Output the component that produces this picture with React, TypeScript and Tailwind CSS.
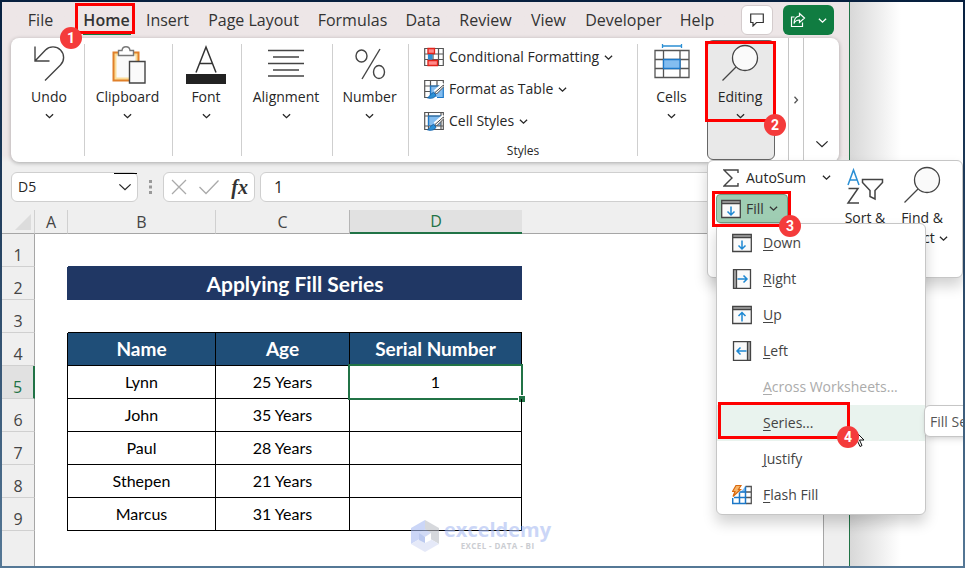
import type { ReactNode } from 'react';
import clsx from 'clsx';

interface Tab {
  label: string;
  width: string;
}

const tabs: Tab[] = [
  { label: 'Insert', width: 'w-[61px]' },
  { label: 'Page Layout', width: 'w-[111px]' },
  { label: 'Formulas', width: 'w-[87px]' },
  { label: 'Data', width: 'w-[54px]' },
  { label: 'Review', width: 'w-[71px]' },
  { label: 'View', width: 'w-[55px]' },
  { label: 'Developer', width: 'w-[95px]' },
  { label: 'Help', width: 'w-[52px]' },
];

const people = [
  { row: 5, name: 'Lynn', age: '25 Years', serial: '1' },
  { row: 6, name: 'John', age: '35 Years', serial: '' },
  { row: 7, name: 'Paul', age: '28 Years', serial: '' },
  { row: 8, name: 'Sthepen', age: '21 Years', serial: '' },
  { row: 9, name: 'Marcus', age: '31 Years', serial: '' },
];

function Chevron({ className = 'w-2 h-2' }: { className?: string }) {
  return (
    <svg viewBox="0 0 8 8" className={clsx('shrink-0', className)} fill="none" stroke="currentColor" strokeWidth="1.3">
      <path d="M.8 2.5 4 5.500 7.200 2.500" vectorEffect="non-scaling-stroke" />
    </svg>
  );
}

function Badge({ children, className }: { children: ReactNode; className: string }) {
  return (
    <span
      className={clsx(
        'absolute z-30 flex items-center justify-center w-[22px] h-[22px] rounded-full bg-[#f43b3b] text-white text-sm font-bold font-[Roboto,sans-serif]',
        className
      )}
    >
      {children}
    </span>
  );
}

function UndoIcon() {
  return (
    <svg viewBox="0 0 36 40" className="w-9 h-10" fill="none" stroke="#444" strokeWidth="1.4">
      <path d="M4 2.500V17H18.500M4 17 14.500 6A10.600 10.600 0 0 1 29.500 21L14 36.500" />
    </svg>
  );
}

function ClipboardIcon() {
  return (
    <svg viewBox="0 0 36 40" className="w-9 h-10">
      <path d="M3.500 8.500H28.500V36.500H3.500Z" fill="#fbdc97" stroke="#e0802a" strokeWidth="2" />
      <path d="M6.500 11.500H25.500V33.500H6.500Z" fill="#fafafa" />
      <path d="M8.500 11.500V6.500H12C12.500 1.500 19.500 1.500 20 6.500H23.500V11.500Z" fill="#fff" stroke="#777" strokeWidth="1.400" />
      <path d="M19.500 17.500H35V39H19.500Z" fill="#fafafa" stroke="#444" strokeWidth="1.400" />
    </svg>
  );
}

function FontIcon() {
  return (
    <svg viewBox="0 0 40 40" className="w-10 h-10" fill="none">
      <path d="M10 28.500 20 3 30 28.500M13.500 19.500H26.500" stroke="#333" strokeWidth="1.500" />
      <path d="M0 30H40V40H0Z" fill="#222" />
    </svg>
  );
}

function AlignIcon() {
  return (
    <svg viewBox="0 0 36 40" className="w-9 h-10" stroke="#444" strokeWidth="1.300">
      <path d="M0 6.500H36M5 13H31M0 19.500H36M5 26H31M0 32H36" />
    </svg>
  );
}

function PercentIcon() {
  return (
    <svg viewBox="0 0 32 40" className="w-8 h-10" fill="none" stroke="#444" strokeWidth="1.400">
      <ellipse cx="7.500" cy="12" rx="5.500" ry="6" />
      <ellipse cx="25" cy="28" rx="5.500" ry="6.500" />
      <path d="M26 5 8 35" />
    </svg>
  );
}

function CellsIcon() {
  return (
    <svg viewBox="0 0 36 40" className="w-9 h-10" fill="none">
      <path d="M8.500 2H27.500M8.500 0V4M27.500 0V4" stroke="#2b8fd4" strokeWidth="1.300" />
      <path d="M1 6.500H35V33.500H1ZM1 15.500H35M1 24.500H35M9.500 6.500V33.500M26 6.500V33.500" stroke="#555" strokeWidth="1.300" />
      <path d="M9.500 15.500H26V24.500H9.500Z" fill="#83bdf0" stroke="#1c78c8" strokeWidth="1.300" />
    </svg>
  );
}

function SearchIcon({ className }: { className?: string }) {
  return (
    <svg viewBox="0 0 38 38" className={clsx('w-[38px] h-[38px]', className)} fill="none" stroke="#444" strokeWidth="1.300">
      <circle cx="24" cy="14" r="12.500" fill="#fafafa" />
      <path d="M15 23 1.500 36.500" />
    </svg>
  );
}

function ConditionalIcon() {
  return (
    <svg viewBox="0 0 20 20" className="w-5 h-5" fill="none">
      <path d="M.700 1.500H19.300V18.500H.700ZM.700 7H19M.700 12.500H19M4.500 1.500V18M9 1.500V18M14.500 1.500V18" stroke="#555" strokeWidth="1.200" />
      <path d="M4.500 7H8V12.500H4.500Z" fill="#fff" stroke="#2b8fd4" />
      <path d="M5 7H8V12.500H5Z" fill="#2b8fd4" />
      <path d="M4 1.500H10.500V6.500H4ZM4 13.500H13.500V18.500H4Z" fill="#ff8a8a" stroke="#e2231a" strokeWidth="1.300" />
    </svg>
  );
}

function TableStyleIcon({ full }: { full?: boolean }) {
  return (
    <svg viewBox="0 0 20 20" className="w-5 h-5" fill="none">
      <path d="M.700 1.500H19.300V18.500H.700Z" fill="#fff" />
      {full ? <path d="M4.500 5H17V15H4.500Z" fill="#83bdf0" /> : <path d="M6.500 7H19V18H6.500Z" fill="#83bdf0" />}
      {full ? (
        <path d="M.700 1.500H19.300V18.500H.700ZM.700 5H19M.700 15H19M4.500 1.500V18M17 1.500V18" stroke="#555" strokeWidth="1.200" />
      ) : (
        <path d="M19.300 7V1.500H.700V18.500H6.500M.700 7H19M.700 12.500H7M6.500 1.500V18M13 1.500V7" stroke="#555" strokeWidth="1.200" />
      )}
      {full ? (
        <path d="M4.500 15V5H17" stroke="#1c78c8" strokeWidth="1.200" />
      ) : (
        <path d="M6.500 18V7H19.300V18.500H13" stroke="#1c78c8" strokeWidth="1.200" />
      )}
      <path d="M20 5 11 13" stroke="#fff" strokeWidth="4" />
      <path d="M19.500 6 11 13.500 12.500 15 20 7.500Z" fill="#fff" stroke="#444" />
      <path d="M3.500 18.800C6 18 6 14.500 9.500 13.500L12 16C11 19 7 20 3.500 18.800Z" fill="#2b8fd4" stroke="#1666b0" />
    </svg>
  );
}

type Direction = 'down' | 'right' | 'up' | 'left';

const arrowPaths: Record<Direction, string> = {
  down: 'M10 7.500V16M6.500 12.500 10 16 13.500 12.500',
  up: 'M10 16.500V7.500M6.500 11 10 7.500 13.500 11',
  right: 'M5.500 10H15M11.500 6.500 15 10 11.500 13.500',
  left: 'M14.500 10H5M8.500 6.500 5 10 8.500 13.500',
};

function FillIcon({ direction }: { direction: Direction }) {
  return (
    <svg viewBox="0 0 20 20" className="w-5 h-5" fill="none">
      {(direction === 'down' || direction === 'up') && (
        <>
          <path d="M.700 1.500H19.300V18.500H.700Z" fill="#fafafa" />
          <path d="M.700 1.500H19.300V4H.700Z" fill="#aaa" />
          <path d="M.700 1.500H19.300V18.500H.700ZM.700 4.500H19.300" stroke="#444" strokeWidth="1.300" />
        </>
      )}
      {direction === 'right' && (
        <>
          <path d="M1.500.700H18.500V19.300H1.500Z" fill="#fafafa" />
          <path d="M1.500.700H5V19.300H1.500Z" fill="#aaa" />
          <path d="M1.500.700H18.500V19.300H1.500ZM4.500.700V19.300" stroke="#444" strokeWidth="1.300" />
        </>
      )}
      {direction === 'left' && (
        <>
          <path d="M1.500.700H18.500V19.300H1.500Z" fill="#fafafa" />
          <path d="M15.500.700H18.500V19.300H15.500Z" fill="#aaa" />
          <path d="M1.500.700H18.500V19.300H1.500ZM15.500.700V19.300" stroke="#444" strokeWidth="1.300" />
        </>
      )}
      <path d={arrowPaths[direction]} stroke="#1e88d2" strokeWidth="1.500" />
    </svg>
  );
}

function FlashFillIcon() {
  return (
    <svg viewBox="0 0 20 20" className="w-5 h-5" fill="none">
      <path d="M13.500 1.500H19.300V18.500H14M14 7H19M14 12.500H19" stroke="#555" strokeWidth="1.300" />
      <path d="M8 7.500 13.500 1.500V7.500Z" fill="#83bdf0" />
      <path d="M13.500 1.500V18.500H.700V13M7.500 7.500V18.500M2 12.500H13.500M7.500 7H13.500" stroke="#1c78c8" strokeWidth="1.500" />
      <path d="M4 .500H9L6.500 4.500H8.500L1 11.500 3 6.500H.500Z" fill="#f7b56a" stroke="#d9690f" strokeWidth="1.200" />
    </svg>
  );
}

function RibbonGroup({ icon, label, className }: { icon: ReactNode; label: string; className: string }) {
  return (
    <div className={clsx('shrink-0 my-1.5 border-r border-[#cfcfcf]', className)}>
      <button className="flex flex-col items-center w-full">
        {icon}
        <span className="mt-[3px] text-sm leading-5">{label}</span>
        <Chevron className="w-[9px] h-[18px]" />
      </button>
    </div>
  );
}

function StyleButton({ icon, label }: { icon: ReactNode; label: string }) {
  return (
    <button className="flex items-center h-8 gap-[5px] text-sm">
      {icon}
      {label}
      <Chevron className="w-[9px] h-[9px]" />
    </button>
  );
}

function MenuItem({ icon, label, disabled, active, children }: {
  icon?: ReactNode;
  label: string;
  disabled?: boolean;
  active?: boolean;
  children?: ReactNode;
}) {
  return (
    <li className="relative">
      <button
        disabled={disabled}
        className={clsx(
          'flex items-center w-full h-9 pl-[15px] gap-[11px] text-sm text-left',
          disabled ? 'text-[#ababab]' : 'text-[#444]',
          active && 'bg-[#e9f3ee]'
        )}
      >
        <span className="w-5 h-5">{icon}</span>
        <span>
          <span className="underline underline-offset-2">{label[0]}</span>
          {label.slice(1)}
        </span>
      </button>
      {children}
    </li>
  );
}

function FillMenu() {
  return (
    <div className="absolute z-20 left-0 top-full w-[210px] h-[292px] pt-px bg-white border border-[#c6c6c6] rounded-md shadow-[0_8px_14px_rgba(0,0,0,0.18)]">
      <ul>
        <MenuItem icon={<FillIcon direction="down" />} label="Down" />
        <MenuItem icon={<FillIcon direction="right" />} label="Right" />
        <MenuItem icon={<FillIcon direction="up" />} label="Up" />
        <MenuItem icon={<FillIcon direction="left" />} label="Left" />
        <MenuItem label="Across Worksheets..." disabled />
        <MenuItem label="Series..." active>
          <span className="absolute left-[1px] -top-[3px] w-[132px] h-[37px] border-3 border-[#fe0000]" />
          <Badge className="left-[120px] top-[21px]">4</Badge>
          <svg viewBox="0 0 12 19" className="absolute z-20 left-[136px] top-6 w-3 h-[19px]">
            <path d="M1 1V15L4.500 12 7 17.500 9 16.500 6.500 11H11Z" fill="#fff" stroke="#111" />
          </svg>
          <span
            role="tooltip"
            className="absolute left-[207px] top-0 h-8 px-[5px] leading-8 text-sm whitespace-nowrap text-[#555] bg-white border border-[#c6c6c6] rounded-md shadow-md"
          >
            Fill Series
          </span>
        </MenuItem>
        <MenuItem label="Justify" />
        <MenuItem icon={<FlashFillIcon />} label="Flash Fill" />
      </ul>
    </div>
  );
}

function EditingPanel() {
  return (
    <div className="absolute z-20 left-0 top-full w-64 h-[118px] flex bg-white border border-[#c6c6c6] rounded-md shadow-[0_8px_14px_rgba(0,0,0,0.18)]">
      <div className="w-[125px] pl-2">
        <button className="flex items-center w-full h-[33px] pl-[7px] text-sm">
          <svg viewBox="0 0 16 18" className="w-4 h-[18px] mr-[7px]" fill="none" stroke="#444" strokeWidth="1.400">
            <path d="M15 4V1H1L9 9 1 17H15V14" />
          </svg>
          AutoSum
          <Chevron className="w-[9px] h-[9px] ml-auto mr-0.5" />
        </button>
        <div className="relative">
          <button className="flex items-center h-[29px] w-[72px] pl-1 gap-[5px] text-sm text-[#333] bg-[#9fcdb3] border border-[#6f9c83] rounded">
            <FillIcon direction="down" />
            Fill
            <Chevron className="w-[9px] h-[9px]" />
          </button>
          <span className="absolute z-30 -left-1 -top-[3px] w-[79px] h-9 border-3 border-[#fe0000]" />
          <Badge className="left-[63px] top-[21px]">3</Badge>
          <FillMenu />
        </div>
      </div>
      <button className="flex flex-col items-center w-[64px] pt-[5px] text-sm leading-5">
        <svg viewBox="0 0 38 38" className="w-[38px] h-[42px]" fill="none" strokeWidth="1.500">
          <path d="M2 17 7.500 2 13 17M4 12H11" stroke="#2b8fd4" />
          <path d="M2.500 20.500H12L2 35H13" stroke="#444" />
          <path d="M16.500 11.500H36.500V14.500L29 22.500V31L24 28.500V22.500L16.500 14.500Z" stroke="#444" />
        </svg>
        Sort &amp;
        <span className="flex items-center gap-1">
          Filter <Chevron />
        </span>
      </button>
      <button className="flex flex-col items-center w-[50px] pt-[5px] text-sm leading-5">
        <SearchIcon className="mb-1" />
        <span className="whitespace-nowrap">Find &amp;</span>
        <span className="flex items-center gap-1">
          Select <Chevron className="w-[9px] h-[9px]" />
        </span>
      </button>
    </div>
  );
}

function Ribbon() {
  return (
    <div className="flex shrink-0 h-[124px] ml-[9px] mr-[10px] bg-white rounded-lg shadow-[0_1px_4px_rgba(0,0,0,0.3)]">
      <RibbonGroup className="w-[74px] pl-[3px]" icon={<UndoIcon />} label="Undo" />
      <RibbonGroup className="w-[88px] pr-0.5" icon={<ClipboardIcon />} label="Clipboard" />
      <RibbonGroup className="w-[69px] pr-0.5" icon={<FontIcon />} label="Font" />
      <RibbonGroup className="w-[91px] pr-0.5" icon={<AlignIcon />} label="Alignment" />
      <RibbonGroup className="w-[76px] pr-0.5" icon={<PercentIcon />} label="Number" />
      <div className="flex flex-col items-start grow my-1.5 pl-[15px] border-r border-[#cfcfcf]">
        <div className="-mt-[3px]">
          <StyleButton icon={<ConditionalIcon />} label="Conditional Formatting" />
          <StyleButton icon={<TableStyleIcon />} label="Format as Table" />
          <StyleButton icon={<TableStyleIcon full />} label="Cell Styles" />
        </div>
        <span className="w-full mt-1 pr-[15px] text-center text-xs leading-5">Styles</span>
      </div>
      <div className="shrink-0 my-1.5 pr-0.5 w-[69px]">
        <button className="flex flex-col items-center w-full">
          <CellsIcon />
          <span className="mt-[3px] text-sm leading-5">Cells</span>
          <Chevron className="w-[9px] h-[18px]" />
        </button>
      </div>
      <div className="relative shrink-0 w-[68px] mt-0.5 h-[120px]">
        <button className="flex flex-col items-center w-full h-full pt-[3px] pr-0.5 bg-[#e9e9e9] border border-[#666] rounded-md">
          <SearchIcon className="mb-0.5" />
          <span className="mt-[3px] text-sm leading-5">Editing</span>
          <Chevron className="w-[9px] h-[18px]" />
        </button>
        <span className="absolute -left-0.5 top-[1px] w-[71px] h-[81px] border-3 border-[#fe0000]" />
        <Badge className="left-[57px] top-[74px]">2</Badge>
        <EditingPanel />
      </div>
      <button aria-label="Scroll ribbon" className="flex items-center justify-center shrink-0 w-4 ml-[13px] border-x border-[#c6c6c6] text-[#555]">
        <Chevron className="w-2 h-2 -rotate-90" />
      </button>
      <button aria-label="Ribbon display options" className="flex items-end justify-center shrink-0 w-[35px] pb-[11px]">
        <Chevron className="w-[14px] h-[14px]" />
      </button>
    </div>
  );
}

function TabBar() {
  return (
    <nav className="flex shrink-0 items-center h-9 pl-[10px] pr-[15px] text-base text-[#333]">
      <button className="w-[57px] h-full">File</button>
      <button className="relative w-[75px] h-full font-semibold">
        Home
        <span className="absolute left-[14px] bottom-[3px] w-12 h-0.5 bg-[#107c41]" />
        <span className="absolute left-1.5 top-[1px] w-[60px] h-[31px] border-3 border-[#fe0000]" />
        <Badge className="-left-[9px] top-[25px]">1</Badge>
      </button>
      <div className="flex -ml-[7px]">
        {tabs.map((tab) => (
          <button key={tab.label} className={clsx('h-9 whitespace-nowrap', tab.width)}>
            {tab.label}
          </button>
        ))}
      </div>
      <button aria-label="Comments" className="flex items-center justify-center w-8 h-[30px] ml-auto bg-white border border-[#d4cccd] rounded-md">
        <svg viewBox="0 0 14 14" className="w-[14px] h-[14px]" fill="none" stroke="#333" strokeWidth="1.200">
          <path d="M.700 1H13.300V9.500H6.500L3 13V9.500H.700Z" />
        </svg>
      </button>
      <button aria-label="Share" className="flex items-center justify-center w-[51px] h-[30px] ml-2.5 gap-3 bg-[#107c41] text-white rounded-md">
        <svg viewBox="0 0 16 16" className="w-4 h-4" fill="none" stroke="currentColor" strokeWidth="1.200">
          <path d="M4.500 5H1.500V14.500H12.500V10.500" />
          <path d="M9.500 1.500 14.500 6 9.500 10.500V8C7 8 5 9 4 11.500 4 7 6 4.500 9.500 4Z" />
        </svg>
        <Chevron className="w-[9px] h-[9px]" />
      </button>
    </nav>
  );
}

function FormulaBar() {
  return (
    <div className="flex shrink-0 items-center h-[30px] mt-2.5 mb-2 ml-[9px] mr-[10px] text-sm">
      <div className="relative flex items-center w-[127px] h-full bg-white border border-[#cfcfcf] rounded-md">
        <input aria-label="Name box" defaultValue="D5" className="w-full pl-1.5 bg-transparent outline-none" />
        <Chevron className="w-[14px] h-[14px] mr-[5px]" />
        <span className="absolute right-0 top-0 w-[23px] h-px bg-black" />
      </div>
      <svg viewBox="0 0 3 14" className="w-[3px] h-[14px] ml-[11px] mr-[11px]" fill="#999">
        <path d="M0 0H3V3H0ZM0 5.500H3V8.500H0ZM0 11H3V14H0Z" />
      </svg>
      <div className="flex items-center justify-between w-[92px] h-full pl-[7px] pr-1.5 bg-white border border-[#cfcfcf] rounded-md text-[#aaa]">
        <button aria-label="Cancel">
          <svg viewBox="0 0 16 16" className="w-4 h-4" fill="none" stroke="currentColor" strokeWidth="1.300">
            <path d="M1 1 15 15M15 1 1 15" />
          </svg>
        </button>
        <button aria-label="Enter">
          <svg viewBox="0 0 20 16" className="w-5 h-4" fill="none" stroke="currentColor" strokeWidth="1.300">
            <path d="M.500 8 7 14.500 19.500 1.500" />
          </svg>
        </button>
        <button aria-label="Insert function" className="text-xl leading-6 italic font-bold text-[#333] font-['Liberation_Serif',serif]">
          fx
        </button>
      </div>
      <input
        aria-label="Formula"
        defaultValue="1"
        className="grow h-full ml-[5px] pl-[13px] text-base bg-white border border-[#cfcfcf] rounded-md outline-none"
      />
    </div>
  );
}

function RowHeader({ row, active }: { row: number; active?: boolean }) {
  return (
    <th
      scope="row"
      className={clsx(
        'h-[33px] p-0 pb-[1px] align-bottom text-base leading-5 font-normal border-b border-b-[#d0d0d0]',
        active
          ? 'bg-[#e1e1e1] text-[#217346] border-r-2 border-r-[#217346]'
          : 'bg-[#efefef] text-[#444] border-r border-r-[#a6a6a6]'
      )}
    >
      {row}
    </th>
  );
}

function Sheet() {
  return (
    <table className="w-full table-fixed border-separate border-spacing-0 text-center text-[#000]">
      <colgroup>
        <col className="w-[33px]" />
        <col className="w-[33px]" />
        <col className="w-[148px]" />
        <col className="w-[134px]" />
        <col className="w-[172px]" />
        <col />
      </colgroup>
      <thead className="text-base leading-5 text-[#444]">
        <tr className="bg-[#efefef]">
          <th className="h-6 p-0 border-b border-[#a6a6a6] border-r border-r-[#d0d0d0]">
            <svg viewBox="0 0 16 16" className="w-4 h-4 ml-[13px]" fill="#dcdcdc">
              <path d="M16 0V16H0Z" />
            </svg>
          </th>
          <th className="p-0 font-normal border-b border-b-[#a6a6a6] border-r border-r-[#d0d0d0]">A</th>
          <th className="p-0 font-normal border-b border-b-[#a6a6a6] border-r border-r-[#d0d0d0]">B</th>
          <th className="p-0 font-normal border-b border-b-[#a6a6a6] border-r border-r-[#b5b5b5]">C</th>
          <th className="p-0 font-normal border-b-2 border-[#217346] text-[#217346] bg-[#e1e1e1]">D</th>
          <th className="p-0 border-b border-[#a6a6a6]"></th>
        </tr>
      </thead>
      <tbody className="text-base leading-5 font-[Lato,sans-serif] [&_th]:font-['Open_Sans',sans-serif]">
        <tr>
          <RowHeader row={1} />
          <td></td>
          <td colSpan={3} className="border-b border-[#203764]"></td>
          <td></td>
        </tr>
        <tr>
          <RowHeader row={2} />
          <td className="border-r border-[#203764]"></td>
          <td colSpan={3} className="p-0 text-[21px] leading-6 font-bold text-white bg-[#203764]">
            Applying Fill Series
          </td>
          <td></td>
        </tr>
        <tr>
          <RowHeader row={3} />
          <td></td>
          <td colSpan={3} className="border-b border-black"></td>
          <td></td>
        </tr>
        <tr className="text-[19px] leading-6 font-bold text-white">
          <RowHeader row={4} />
          <td className="border-r border-black"></td>
          <td className="p-0 bg-[#1f4e78] border-r border-b border-black">Name</td>
          <td className="p-0 bg-[#1f4e78] border-r border-b border-black">Age</td>
          <td className="p-0 bg-[#1f4e78] border-r border-b border-black">Serial Number</td>
          <td></td>
        </tr>
        {people.map((person) => (
          <tr key={person.row}>
            <RowHeader row={person.row} active={person.row === 5} />
            <td className="border-r border-black"></td>
            <td className="p-0 border-r border-b border-black">{person.name}</td>
            <td className="p-0 border-r border-b border-black">{person.age}</td>
            <td className="relative p-0 border-r border-b border-black">
              {person.serial}
              {person.row === 5 && (
                <>
                  <span className="absolute -left-0.5 -right-0.5 -top-0.5 -bottom-0.5 border-2 border-[#217346]" />
                  <span className="absolute -right-1 -bottom-1 w-1.5 h-1.5 bg-[#217346] outline outline-white" />
                </>
              )}
            </td>
            <td></td>
          </tr>
        ))}
      </tbody>
    </table>
  );
}

function Watermark() {
  return (
    <div className="absolute left-[409px] bottom-[14px] flex items-center gap-[5px] opacity-60">
      <svg viewBox="0 0 28 32" className="w-7 h-8">
        <path d="M14 0 0 8V24L14 16Z" fill="#a9bcf2" />
        <path d="M14 0 28 8V24L14 16Z" fill="#bcbfc6" />
        <path d="M0 24 14 16 28 24 14 32Z" fill="#d5dcf5" />
        <path d="M14 9 20 13 14 17 8 13Z" fill="#b4c3ef" />
        <path d="M8 13 14 17V23L8 20Z" fill="#8ea6e6" />
        <path d="M20 13 14 17V23L20 20Z" fill="#fff" />
      </svg>
      <div className="flex flex-col items-center -mt-1">
        <span className="text-xl leading-6 font-bold text-[#a9bcf2]">exceldemy</span>
        <span className="text-[8px] leading-2 font-bold tracking-wider text-[#a9adb5]">EXCEL - DATA - BI</span>
      </div>
    </div>
  );
}

export default function App() {
  return (
    <div className="h-screen p-0.5 bg-linear-to-b from-[#07203f] to-[#557896] font-['Open_Sans',sans-serif] text-[#262626]">
      <div className="relative flex h-full overflow-hidden bg-white">
        <main className="relative z-10 flex flex-col grow min-w-0 bg-[#efefef] border-r border-[#217346]">
          <div className="flex flex-col shrink-0 bg-linear-to-b from-[#ede6e7] from-96% to-[#efefef]">
            <TabBar />
            <Ribbon />
          </div>
          <FormulaBar />
          <div className="flex grow min-h-0">
            <div className="flex flex-col grow min-w-0 bg-white">
              <Sheet />
              <div className="w-[33px] grow bg-[#efefef] border-r border-[#a6a6a6]" />
            </div>
            <div className="w-[26px] shrink-0 border-l border-[#a6a6a6]" />
          </div>
          <Watermark />
        </main>
        <aside className="w-[113px] shrink-0 bg-linear-to-r from-[#d8d8d8] to-white to-45%" />
      </div>
    </div>
  );
}
